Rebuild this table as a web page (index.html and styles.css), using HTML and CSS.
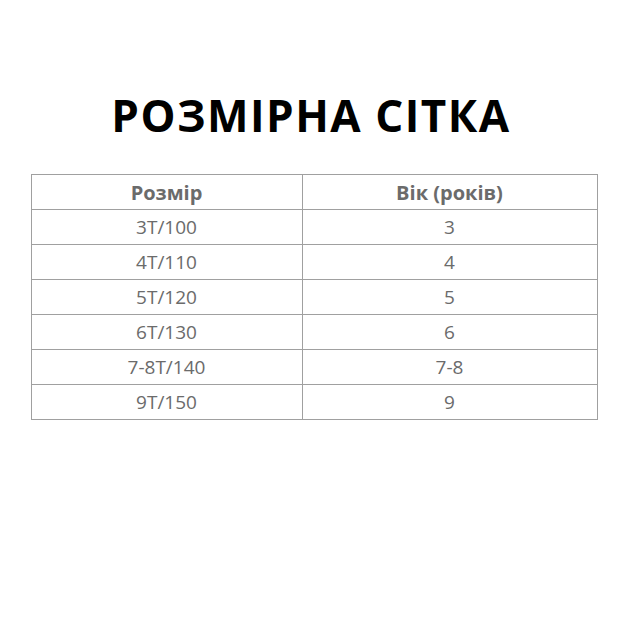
FILE: index.html
```html
<!DOCTYPE html>
<html lang="uk">
<head>
<meta charset="utf-8">
<link rel="stylesheet" href="styles.css">
</head>
<body>
<main class="page">
  <h1 class="title">РОЗМІРНА СІТКА</h1>
  <table class="sizes">
    <thead>
      <tr><th class="col-size">Розмір</th><th class="col-age">Вік (років)</th></tr>
    </thead>
    <tbody>
      <tr><td>3T/100</td><td>3</td></tr>
      <tr><td>4T/110</td><td>4</td></tr>
      <tr><td>5T/120</td><td>5</td></tr>
      <tr><td>6T/130</td><td>6</td></tr>
      <tr><td>7-8T/140</td><td>7-8</td></tr>
      <tr><td>9T/150</td><td>9</td></tr>
    </tbody>
  </table>
</main>
</body>
</html>
```
FILE: styles.css
```css
html, body {
  margin: 0;
  padding: 0;
  background: #fff;
}
.page {
  width: 630px;
  height: 630px;
  display: flex;
  flex-direction: column;
  align-items: center;
  font-family: "Open Sans", "Noto Sans", sans-serif;
}
.title {
  margin: 85px 0 0;
  font-size: 44px;
  font-weight: 700;
  line-height: 60px;
  color: #000;
  letter-spacing: 1.5px;
  transform: translateX(-4px);
}
.sizes {
  margin-top: 29px;
  width: 567px;
  border-collapse: collapse;
  border: 1.5px solid #a0a0a0;
  table-layout: fixed;
  transform: translateX(-1px);
}
.sizes .col-size {
  width: 270px;
}
.sizes th,
.sizes td {
  border: 1.5px solid #a0a0a0;
  height: 34px;
  padding: 0;
  text-align: center;
  font-size: 19px;
  color: #6b6b6b;
}
.sizes th {
  font-weight: 700;
  font-size: 20px;
}
.sizes td {
  font-weight: 400;
}
```
